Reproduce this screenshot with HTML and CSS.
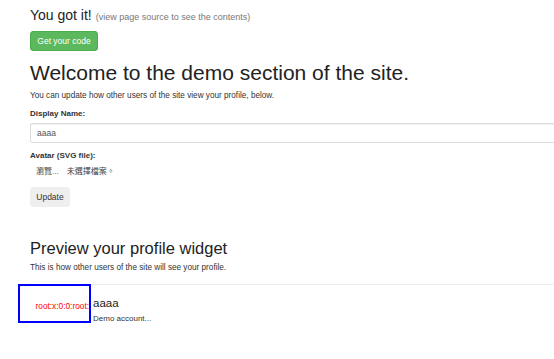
FILE: index.html
```html
<!DOCTYPE html>
<html lang="en">
<head>
    <meta charset="UTF-8">
    <meta name="viewport" content="width=device-width, initial-scale=1.0">
    <title>Demo section</title>
    <link rel="stylesheet" href="styles.css">
</head>
<body>
<div class="container">
    <!-- Code banner -->
    <div class="got-it">
        <h3>You got it! <small>(view page source to see the contents)</small></h3>
        <button class="btn btn-success">Get your code</button>
    </div>

    <h1>Welcome to the demo section of the site.</h1>
    <p>You can update how other users of the site view your profile, below.</p>

    <!-- Profile form -->
    <form class="profile-form">
        <label for="displayName">Display Name:</label>
        <input type="text" id="displayName" class="form-control" value="aaaa">

        <label>Avatar (SVG file):</label>
        <div class="file-input">
            <span class="file-btn">瀏覽...</span>
            <span>未選擇檔案。</span>
        </div>

        <button type="button" class="btn btn-default">Update</button>
    </form>

    <h2>Preview your profile widget</h2>
    <p>This is how other users of the site will see your profile.</p>
</div>

<div class="preview">
    <div class="media">
        <div class="avatar">root:x:0:0:root:</div>
        <div class="media-body">
            <h4>aaaa</h4>
            <p>Demo account...</p>
        </div>
    </div>
</div>
</body>
</html>
```
FILE: styles.css
```css
/* General Styles */
html, body {
    overflow: hidden;
}

body {
    font-family: "Liberation Sans", Arial, sans-serif;
    font-size: 9px;
    color: #333;
    background: white;
    margin: 0;
    padding: 0;
}

.container {
    width: 600px;
    padding: 0 0 0 30px;
}

h1, h2, h3, h4, p {
    margin: 0;
    font-weight: normal;
}

.got-it h3 {
    font-size: 14px;
    line-height: 17px;
    padding-top: 7px;
    color: #222;
}

.got-it small {
    font-size: 9px;
    color: #777;
}

.btn {
    font-family: "Liberation Sans", Arial, sans-serif;
    font-size: 8.5px;
    border: 1px solid transparent;
    border-radius: 3px;
    padding: 0 8px;
    height: 20px;
    cursor: pointer;
}

.btn-success {
    margin-top: 5px;
    width: 68px;
    padding: 0;
    background: #5cb85c;
    border-color: #4cae4c;
    color: white;
}

.btn-default {
    width: 40px;
    padding: 0;
    background: #efefef;
    border-color: #efefef;
    color: #333;
}

h1 {
    font-size: 21px;
    line-height: 28px;
    margin-top: 8px;
    color: #222;
}

.container > p {
    font-size: 8.2px;
    line-height: 10px;
    color: #333;
}

h1 + p {
    margin-top: 4px;
}

.profile-form {
    display: flex;
    flex-direction: column;
    align-items: flex-start;
    margin-top: 8px;
}

.profile-form label {
    font-weight: bold;
    font-size: 8px;
    line-height: 10px;
    margin-bottom: 4px;
}

.form-control {
    box-sizing: border-box;
    width: 100%;
    height: 20px;
    padding: 0 6px;
    font-family: "Liberation Sans", Arial, sans-serif;
    font-size: 8.5px;
    color: #555;
    border: 1px solid #ddd;
    border-radius: 2px;
    box-shadow: inset 0 1px 1px rgba(0, 0, 0, 0.06);
    margin-bottom: 8px;
}

.file-input {
    display: flex;
    gap: 8px;
    font-family: "Liberation Sans", "Noto Sans CJK TC", sans-serif;
    font-size: 8px;
    line-height: 10px;
    color: #444;
    padding-left: 6px;
    margin: 2px 0 10px;
}

h2 {
    font-size: 16.5px;
    line-height: 20px;
    margin-top: 31px;
    color: #222;
}

h2 + p {
    margin-top: 5px;
}

.preview {
    margin: 11px 0 0 20px;
    border-top: 1px solid #eee;
}

.media {
    display: flex;
    margin-left: -2px;
}

.avatar {
    box-sizing: border-box;
    width: 73px;
    height: 39px;
    border: 2px solid #0000ff;
    color: #ff0000;
    font-size: 8.3px;
    text-align: right;
    padding-top: 15px;
    margin-top: -1px;
    white-space: nowrap;
    overflow: hidden;
}

.media-body {
    padding: 12px 0 0 2px;
}

.media-body h4 {
    font-size: 11.5px;
    line-height: 13px;
    color: #222;
}

.media-body p {
    font-size: 8px;
    line-height: 10px;
    margin-top: 4px;
}
```
